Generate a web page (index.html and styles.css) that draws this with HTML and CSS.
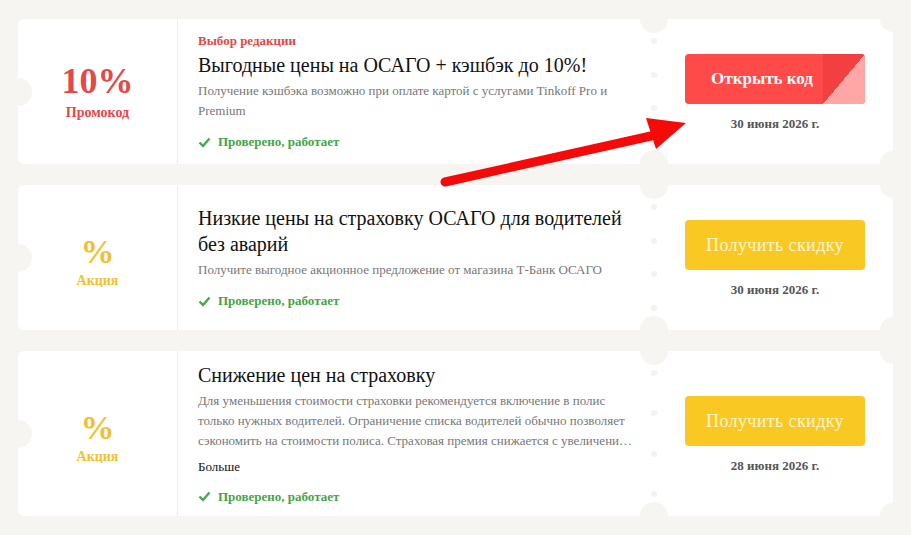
FILE: index.html
```html
<!doctype html>
<html>
<head>
<meta charset="utf-8">
<link rel="stylesheet" href="styles.css">
<title>Промокоды ОСАГО</title>
</head>
<body>
<div class="list">

<div class="card">
  <div class="badge red">
    <div class="badge-value">10%</div>
    <div class="badge-label">Промокод</div>
  </div>
  <div class="info">
    <div class="choice">Выбор редакции</div>
    <div class="title">Выгодные цены на ОСАГО + кэшбэк до 10%!</div>
    <div class="desc">Получение кэшбэка возможно при оплате картой с услугами Tinkoff Pro и Premium</div>
    <div class="checked"><svg width="13" height="11" viewBox="0 0 13 11"><path d="M1.5 5.5l3.5 3.5 6.5-7.5" fill="none" stroke="#4aa84e" stroke-width="2.4"/></svg>Проверено, работает</div>
  </div>
  <div class="action">
    <a class="btn btn-code" href="#">Открыть код<span class="fold"></span></a>
    <div class="date">30 июня 2026 г.</div>
  </div>
  <span class="notch-left"></span>
  <span class="notch-top"></span>
  <span class="notch-bottom"></span>
  <span class="corner-top"></span>
  <span class="corner-bottom"></span>
  <div class="dots"><i></i><i></i><i></i><i></i></div>
</div>

<div class="card">
  <div class="badge yellow">
    <div class="badge-value">%</div>
    <div class="badge-label">Акция</div>
  </div>
  <div class="info">
    <div class="title">Низкие цены на страховку ОСАГО для водителей без аварий</div>
    <div class="desc">Получите выгодное акционное предложение от магазина Т-Банк ОСАГО</div>
    <div class="checked"><svg width="13" height="11" viewBox="0 0 13 11"><path d="M1.5 5.5l3.5 3.5 6.5-7.5" fill="none" stroke="#4aa84e" stroke-width="2.4"/></svg>Проверено, работает</div>
  </div>
  <div class="action">
    <a class="btn btn-sale" href="#">Получить скидку</a>
    <div class="date">30 июня 2026 г.</div>
  </div>
  <span class="notch-left"></span>
  <span class="notch-top"></span>
  <span class="notch-bottom"></span>
  <span class="corner-top"></span>
  <span class="corner-bottom"></span>
  <div class="dots"><i></i><i></i><i></i><i></i></div>
</div>

<div class="card tall">
  <div class="badge yellow">
    <div class="badge-value">%</div>
    <div class="badge-label">Акция</div>
  </div>
  <div class="info">
    <div class="title">Снижение цен на страховку</div>
    <div class="desc">Для уменьшения стоимости страховки рекомендуется включение в полис только нужных водителей. Ограничение списка водителей обычно позволяет сэкономить на стоимости полиса. Страховая премия снижается с увеличени…</div>
    <div class="more">Больше</div>
    <div class="checked"><svg width="13" height="11" viewBox="0 0 13 11"><path d="M1.5 5.5l3.5 3.5 6.5-7.5" fill="none" stroke="#4aa84e" stroke-width="2.4"/></svg>Проверено, работает</div>
  </div>
  <div class="action">
    <a class="btn btn-sale" href="#">Получить скидку</a>
    <div class="date">28 июня 2026 г.</div>
  </div>
  <span class="notch-left"></span>
  <span class="notch-top"></span>
  <span class="notch-bottom"></span>
  <span class="corner-top"></span>
  <span class="corner-bottom"></span>
  <div class="dots"><i></i><i></i><i></i><i></i></div>
</div>

</div>

<svg class="arrow" width="260" height="80" viewBox="0 0 260 80">
  <line x1="7" y1="66" x2="222" y2="18" stroke="#f50a0a" stroke-width="9" stroke-linecap="round"/>
  <polygon points="208,2 248,7 218,33" fill="#f50a0a"/>
</svg>
</body>
</html>
```

FILE: styles.css
```css
body {
    margin: 0;
    background-color: #f6f5f1;
    font-family: "Liberation Serif", "Times New Roman", serif;
    position: relative;
    height: 535px;
    overflow: hidden;
}
.list {
    display: flex;
    flex-direction: column;
    gap: 21px;
    padding: 19px 0 0 18px;
}
.card {
    position: relative;
    display: flex;
    width: 875px;
    height: 145px;
    background-color: #fff;
    border-radius: 6px;
}
.card.tall {
    height: 165px;
}

/* left badge */
.badge {
    width: 159px;
    border-right: 1px solid #f0efeb;
    display: flex;
    flex-direction: column;
    align-items: center;
    justify-content: center;
    font-weight: bold;
}
.badge-value {
    font-size: 36px;
    line-height: 36px;
}
.badge-label {
    font-size: 14px;
    line-height: 18px;
    margin-top: 5px;
}
.red {
    color: #e54848;
}
.red .badge-value {
    margin-top: 2px;
}
.yellow {
    color: #f4c12e;
}
.yellow .badge-value {
    font-size: 34px;
    margin-top: 8px;
}
.yellow .badge-label {
    margin-top: 2px;
}

/* middle */
.info {
    flex: 1;
    padding: 0 20px;
    display: flex;
    flex-direction: column;
    justify-content: center;
}
.choice {
    color: #e54848;
    font-weight: bold;
    font-size: 13px;
    line-height: 18px;
    margin-bottom: 2px;
}
.title {
    color: #111;
    font-size: 20px;
    line-height: 26px;
}
.desc {
    color: #777;
    font-size: 13px;
    line-height: 20px;
    margin-top: 3px;
}
.more {
    color: #111;
    font-size: 13px;
    line-height: 18px;
    margin-top: 7px;
}
.checked {
    display: flex;
    align-items: center;
    gap: 7px;
    color: #46a446;
    font-weight: bold;
    font-size: 13px;
    line-height: 18px;
    margin-top: 12px;
}

/* right */
.action {
    width: 239px;
    padding: 4px 0 0 3px;
    box-sizing: border-box;
    display: flex;
    flex-direction: column;
    align-items: center;
    justify-content: center;
}
.btn {
    position: relative;
    display: flex;
    align-items: center;
    justify-content: center;
    width: 180px;
    height: 50px;
    border-radius: 4px;
    text-decoration: none;
    overflow: hidden;
}
.btn-code {
    background-color: #ff4a4a;
    color: #fff;
    font-weight: bold;
    font-size: 17px;
    padding-right: 26px;
    box-sizing: border-box;
}
.fold {
    position: absolute;
    right: 0;
    top: 0;
    width: 42px;
    height: 50px;
    background: linear-gradient(to bottom right, #f23f3f 50%, #ffa6a6 50%);
}
.btn-sale {
    background-color: #f9c823;
    color: #fff6cf;
    font-size: 18px;
    letter-spacing: 0.4px;
}
.date {
    margin-top: 11px;
    color: #555;
    font-weight: bold;
    font-size: 13px;
    line-height: 18px;
}

/* ticket cut-outs */
.notch-left,
.notch-top,
.notch-bottom,
.corner-top,
.corner-bottom {
    position: absolute;
    background-color: #f6f5f1;
    border-radius: 50%;
}
.notch-left {
    left: -14px;
    top: calc(50% - 14px);
    width: 28px;
    height: 28px;
}
.notch-top,
.notch-bottom {
    left: 622px;
    width: 28px;
    height: 28px;
}
.notch-top {
    top: -14px;
}
.notch-bottom {
    bottom: -14px;
}
.corner-top,
.corner-bottom {
    right: -13px;
    width: 26px;
    height: 26px;
}
.corner-top {
    top: -13px;
}
.corner-bottom {
    bottom: -13px;
}
.dots {
    position: absolute;
    left: 633px;
    top: 14px;
    bottom: 14px;
    padding: 5px 0;
    display: flex;
    flex-direction: column;
    justify-content: space-between;
}
.dots i {
    display: block;
    width: 6px;
    height: 6px;
    border-radius: 50%;
    background-color: #f3f2ee;
}

.arrow {
    position: absolute;
    left: 438px;
    top: 116px;
}
```
